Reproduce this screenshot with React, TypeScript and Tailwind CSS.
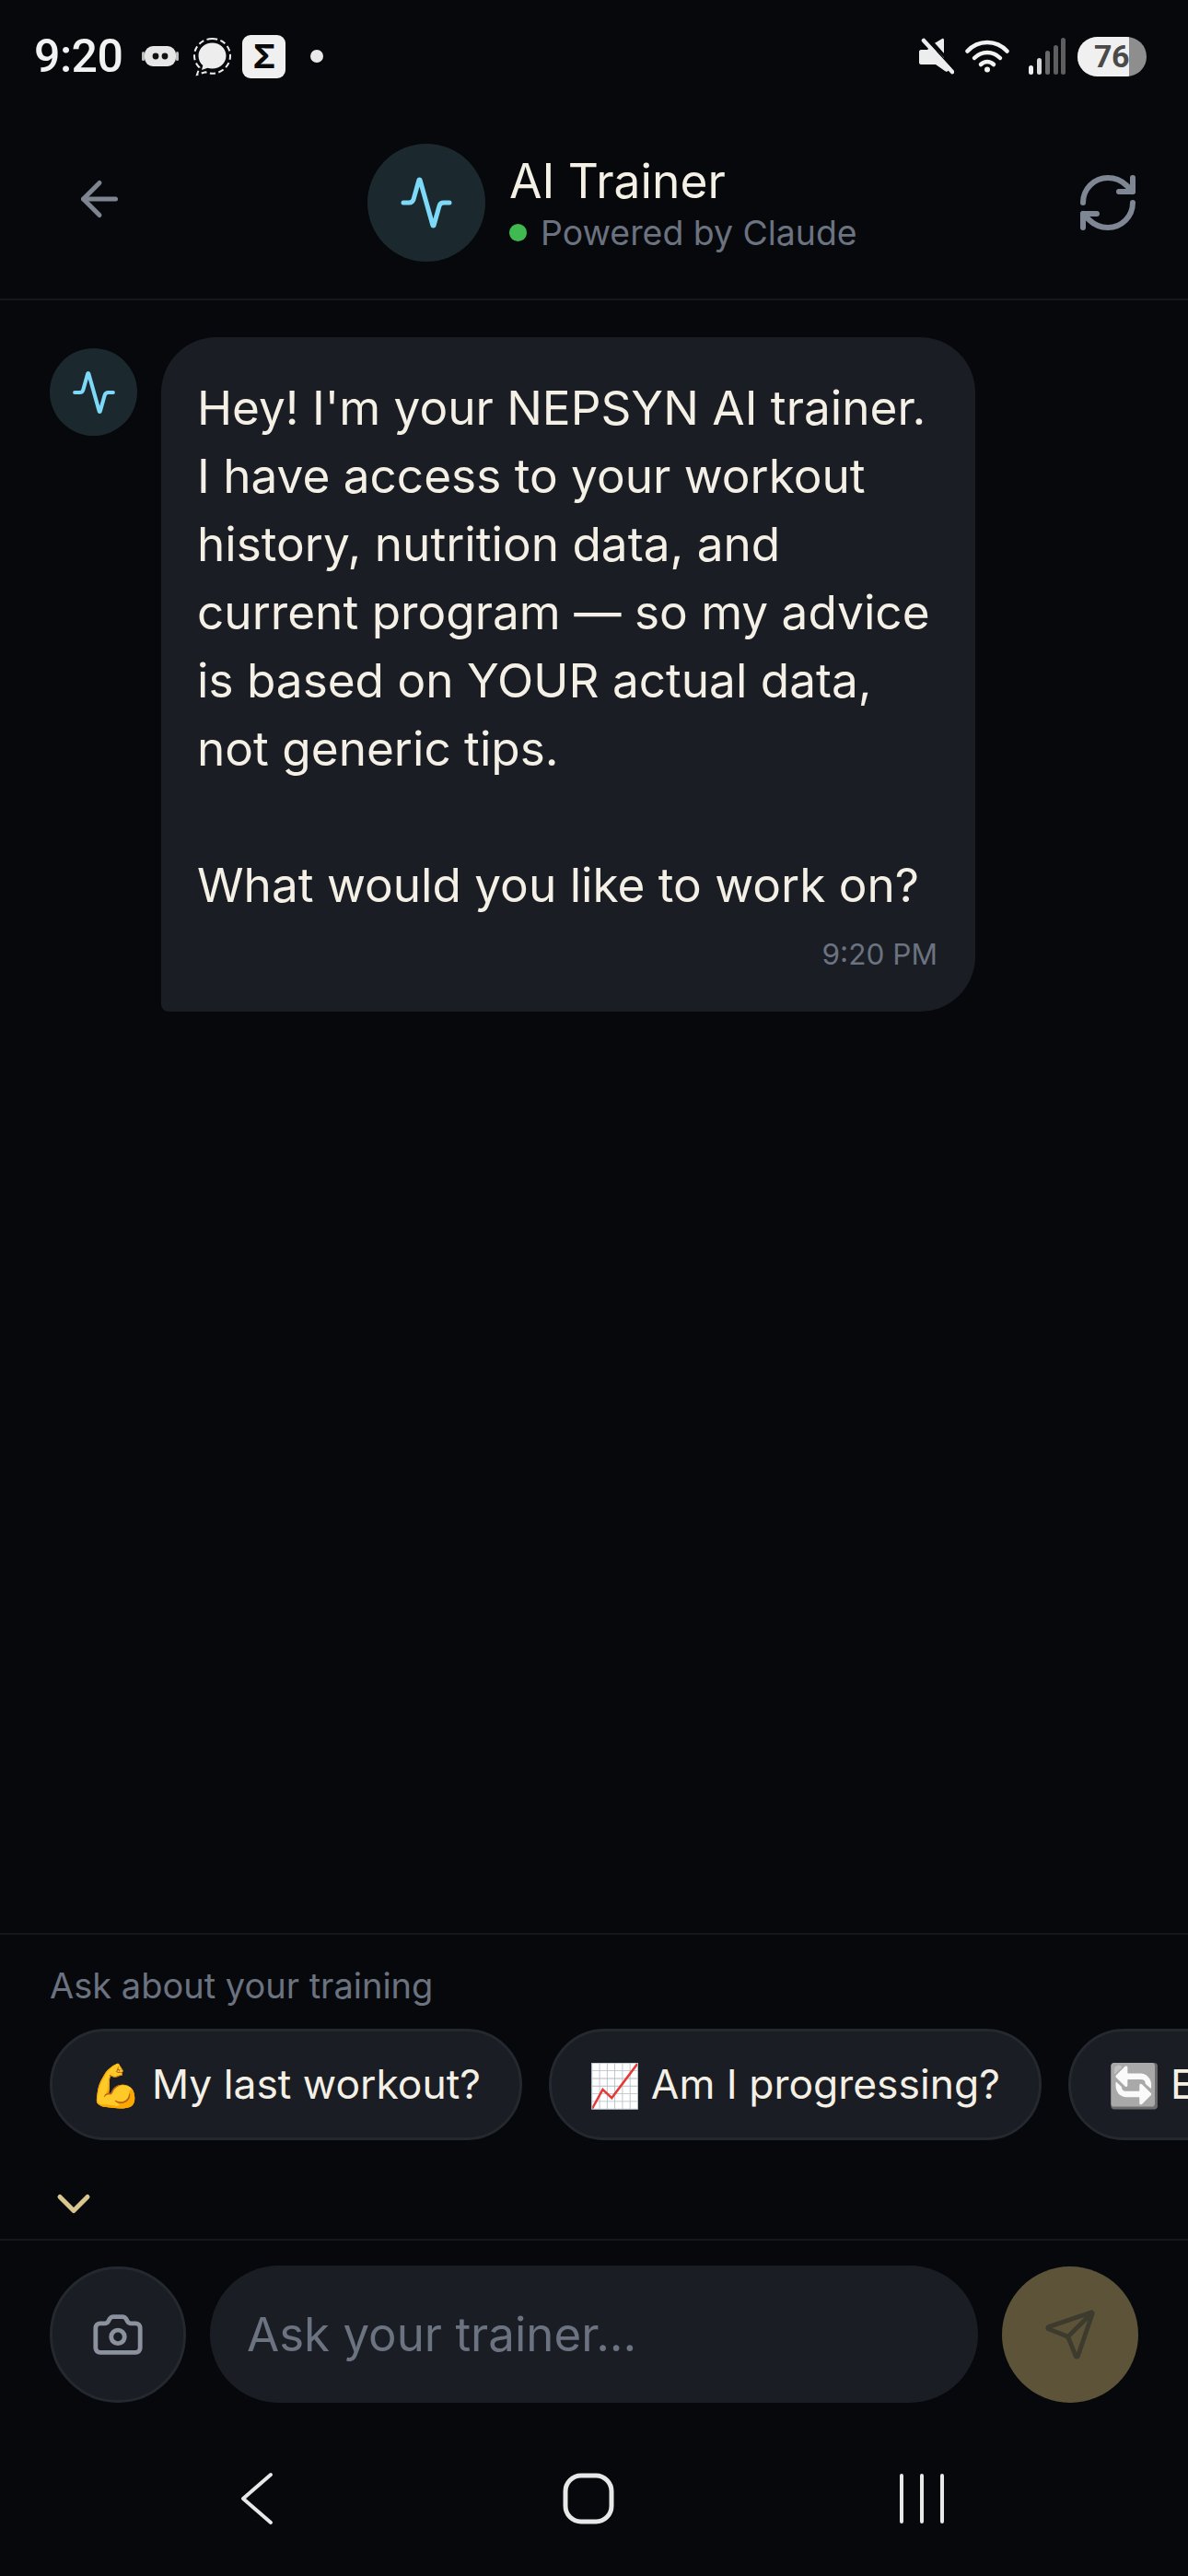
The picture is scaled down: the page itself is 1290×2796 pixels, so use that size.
import { Activity, ArrowLeft, Camera, ChevronDown, RefreshCw, Send } from "lucide-react";

const font = "font-['Inter','Noto_Sans',sans-serif]";

function StatusBar() {
  return (
    <div className="flex h-[122px] shrink-0 items-center pl-[37px] pr-[45px]">
      <span className="text-[50px] font-medium leading-none tracking-[-0.5px] text-[#f2f2f2] font-['Roboto',sans-serif]">9:20</span>
      <svg className="ml-[21px]" width="40" height="24" viewBox="0 0 40 24">
        <rect x="3" y="1" width="34" height="22" rx="9" fill="#e6e6e6" />
        <rect x="0" y="7" width="3" height="10" rx="1.5" fill="#bdbdbd" />
        <rect x="37" y="7" width="3" height="10" rx="1.5" fill="#bdbdbd" />
        <circle cx="15" cy="12" r="3.4" fill="#111" />
        <circle cx="25" cy="12" r="3.4" fill="#111" />
      </svg>
      <svg className="ml-[15px]" width="43" height="43" viewBox="0 0 43 43">
        <path d="M21.5 6.500C13.500 6.500 6.500 12.500 6.500 20.500c0 4.200 1.700 8 4.800 10.500l-1.300 5 6.300-2.300c1.700.5 3.300.8 5.200.8 8.200 0 15-6 15-14S29.700 6.500 21.500 6.500z" fill="#ededed" />
        <path d="M21.500 2C10.700 2 2 10.300 2 20.500c0 5 2.100 9.500 5.500 12.800L5 41l9-2.700c2.300.9 4.900 1.400 7.500 1.400C32.300 39.700 41 31 41 20.500S32.300 2 21.500 2z" fill="none" stroke="#ededed" strokeWidth="2" strokeDasharray="6 3.500" />
      </svg>
      <div className="ml-[11px] flex h-[47px] w-[47px] items-center justify-center rounded-[9px] bg-[#f0f0f0]">
        <span className="text-[36px] font-bold leading-none text-[#0a0a0a] font-['Inter',sans-serif]">Σ</span>
      </div>
      <div className="ml-[27px] h-[14px] w-[14px] rounded-full bg-[#e8e8e8]" />
      <div className="ml-auto flex items-center">
        <svg width="38" height="40" viewBox="0 0 38 40">
          <path d="M2 13h7l4-4 22 24-5 4-2-1-10-7H2c-1 0-2-1-2-2V15c0-1 1-2 2-2z" fill="#ededed" />
          <path d="M15 7l10-6c1-.5 2 .2 2 1.500V22z" fill="#ededed" />
          <path d="M4 2l32 36" stroke="#060709" strokeWidth="3" transform="translate(5 -3)" />
          <path d="M5 3l31 34" stroke="#ededed" strokeWidth="4.500" strokeLinecap="round" />
        </svg>
        <svg className="ml-[12px]" width="48" height="36" viewBox="0 0 48 36" fill="none" stroke="#f2f2f2" strokeWidth="4.500" strokeLinecap="round">
          <path d="M2.500 12.500C8.500 6 16 3 24 3s15.500 3 21.500 9.500" />
          <path d="M10 20c4-4 8.800-6 14-6s10 2 14 6" />
          <path d="M17 27c2-1.900 4.400-3 7-3s5 1.100 7 3" />
          <circle cx="24" cy="32.500" r="3" fill="#f2f2f2" stroke="none" />
        </svg>
        <svg className="ml-[21px]" width="40" height="40" viewBox="0 0 40 40">
          <rect x="0" y="30" width="5" height="10" rx="2.500" fill="#f0f0f0" />
          <rect x="9" y="22" width="5" height="18" rx="2.500" fill="#d8d8d8" />
          <rect x="18" y="14" width="5" height="26" rx="2.500" fill="#6b6b6b" />
          <rect x="27" y="8" width="5" height="32" rx="2.500" fill="#5e5e5e" />
          <rect x="35" y="0" width="5" height="40" rx="2.500" fill="#5e5e5e" />
        </svg>
        <div className="relative ml-[13px] flex h-[43px] w-[75px] items-center overflow-hidden rounded-full bg-[#8e8e8e]">
          <div className="flex h-full w-[56px] items-center justify-end bg-[#f0f0f0]">
            <span className="text-[34px] font-bold leading-none tracking-[-0.5px] text-[#4a4a4a] font-['Roboto',sans-serif]">76</span>
          </div>
        </div>
      </div>
    </div>
  );
}

function Header() {
  return (
    <header className="flex h-[204px] shrink-0 items-center border-b-2 border-[#14171c] pb-[6px] pl-[78px] pr-[51px]">
      <ArrowLeft className="mb-[8px] text-[#7e8591]" size={60} strokeWidth={2} />
      <div className="ml-[261px] flex items-center">
        <div className="flex h-[128px] w-[128px] items-center justify-center rounded-full bg-[#1b282e]">
          <Activity className="text-[#7dd9f7]" size={60} strokeWidth={2} />
        </div>
        <div className="ml-[26px] flex flex-col">
          <span className="text-[51.500px] leading-[62px] text-[#f5f0e6]">AI Trainer</span>
          <div className="mt-[3px] flex items-center">
            <div className="h-[19px] w-[19px] rounded-full bg-[#3fb950]" />
            <span className="ml-[15px] text-[37.400px] leading-[46px] text-[#6b7280]">Powered by Claude</span>
          </div>
        </div>
      </div>
      <RefreshCw className="ml-auto text-[#7e8793]" size={72} strokeWidth={2} />
    </header>
  );
}

function Message() {
  return (
    <div className="flex items-start pl-[54px] pt-[40px]">
      <div className="mt-[12px] flex h-[95px] w-[95px] shrink-0 items-center justify-center rounded-full bg-[#1b282e]">
        <Activity className="text-[#7dd9f7]" size={50} strokeWidth={2} />
      </div>
      <div className="ml-[26px] flex h-[732px] w-[884px] flex-col rounded-[60px] rounded-bl-[8px] bg-[#1a1d24] pl-[39px] pr-[41px] pt-[39px]">
        <p className="whitespace-pre-line text-[51.300px] leading-[74px] text-[#f5f0e6]">
          {"Hey! I'm your NEPSYN AI trainer.\nI have access to your workout\nhistory, nutrition data, and\ncurrent program — so my advice\nis based on YOUR actual data,\nnot generic tips.\n\nWhat would you like to work on?"}
        </p>
        <span className="mt-[19px] self-end text-[31.600px] leading-[40px] text-[#6b7280]">9:20 PM</span>
      </div>
    </div>
  );
}

function Chip({ emoji, label, muted }: { emoji: string; label: string; muted?: boolean }) {
  return (
    <div className="flex h-[121px] shrink-0 items-center whitespace-nowrap rounded-full border-[3px] border-[#24282f] bg-[#1a1d24] pl-[40px] pr-[42px] text-[44.400px] text-[#f5f0e6]">
      <span className={muted ? "text-[46px] leading-none grayscale" : "text-[46px] leading-none"}>{emoji}</span>
      <span className="ml-[11px]">{label}</span>
    </div>
  );
}

function Suggestions() {
  return (
    <div className="shrink-0 border-t-2 border-[#14171c] pt-[32px]">
      <div className="pl-[54px] text-[38px] leading-[46px] text-[#6b7280]">Ask about your training</div>
      <div className="mt-[24px] flex gap-[29px] overflow-hidden pl-[54px]">
        <Chip emoji="💪" label="My last workout?" />
        <Chip emoji="📈" label="Am I progressing?" />
        <Chip emoji="🔄" label="Exercise swap?" muted />
      </div>
      <div className="flex h-[107px] items-start pl-[50px] pt-[39px]">
        <ChevronDown className="text-[#d9c68f]" size={60} strokeWidth={2} />
      </div>
    </div>
  );
}

function InputBar() {
  return (
    <div className="flex shrink-0 items-center border-t-2 border-[#14171c] pl-[54px] pr-[54px] pt-[27px]">
      <button className="flex h-[148px] w-[148px] shrink-0 items-center justify-center rounded-full border-[3px] border-[#24282f] bg-[#1a1d24]">
        <Camera className="text-[#8b929d]" size={58} strokeWidth={2} />
      </button>
      <input
        readOnly
        placeholder="Ask your trainer..."
        className="ml-[26px] h-[149px] w-[834px] rounded-full bg-[#1a1d24] pl-[40px] text-[51px] text-[#f5f0e6] outline-none placeholder:text-[#6b7280]"
      />
      <button className="ml-[26px] flex h-[148px] w-[148px] shrink-0 items-center justify-center rounded-full bg-[#5c5339]">
        <Send className="text-[#3d3a2e]" size={58} strokeWidth={2} />
      </button>
    </div>
  );
}

function NavBar() {
  return (
    <div className="flex h-[188px] shrink-0 items-center pl-[260px] pt-[20px]">
      <svg width="38" height="58" viewBox="0 0 38 58" fill="none" stroke="#e8e8e8" strokeWidth="4" strokeLinecap="round" strokeLinejoin="round">
        <path d="M34 3 4 29l30 26" />
      </svg>
      <svg className="ml-[312px]" width="58" height="58" viewBox="0 0 58 58" fill="none" stroke="#e8e8e8" strokeWidth="5">
        <rect x="4" y="4" width="50" height="50" rx="17" />
      </svg>
      <svg className="ml-[308px]" width="50" height="54" viewBox="0 0 50 54" fill="none" stroke="#e8e8e8" strokeWidth="4" strokeLinecap="round">
        <path d="M3 2v50M25 2v50M47 2v50" />
      </svg>
    </div>
  );
}

export default function App() {
  return (
    <div className={`flex h-[2796px] w-[1290px] flex-col overflow-hidden bg-[#06080b] ${font}`}>
      <StatusBar />
      <Header />
      <main className="min-h-0 flex-1">
        <Message />
      </main>
      <Suggestions />
      <InputBar />
      <NavBar />
    </div>
  );
}
